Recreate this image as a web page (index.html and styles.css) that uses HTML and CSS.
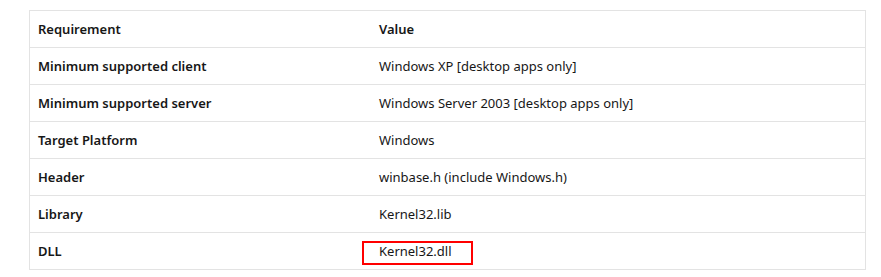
FILE: index.html
```html
<!DOCTYPE html>
<html>
<head>
<meta charset="utf-8">
<link rel="stylesheet" href="styles.css">
</head>
<body>
<div class="page">
  <table class="req">
    <thead>
      <tr><th class="c1">Requirement</th><th>Value</th></tr>
    </thead>
    <tbody>
      <tr><td class="c1">Minimum supported client</td><td>Windows XP [desktop apps only]</td></tr>
      <tr><td class="c1">Minimum supported server</td><td>Windows Server 2003 [desktop apps only]</td></tr>
      <tr><td class="c1">Target Platform</td><td>Windows</td></tr>
      <tr><td class="c1">Header</td><td>winbase.h (include Windows.h)</td></tr>
      <tr><td class="c1">Library</td><td>Kernel32.lib</td></tr>
      <tr><td class="c1">DLL</td><td class="marked">Kernel32.dll<span class="highlight"></span></td></tr>
    </tbody>
  </table>
</div>
</body>
</html>
```
FILE: styles.css
```css
html, body {
  margin: 0;
  background: #ffffff;
}
.page {
  padding: 10px 0 0 29px;
}
.req {
  border-collapse: collapse;
  width: 837px;
  font-family: "Noto Sans", "Open Sans", sans-serif;
  font-size: 13px;
  color: #171717;
}
.req th, .req td {
  border: 1px solid #e3e3e3;
  border-left: none;
  border-right: none;
  padding: 8px 8px;
  height: 20px;
  line-height: 20px;
  text-align: left;
  vertical-align: middle;
}
.req th:first-child, .req td:first-child {
  border-left: 1px solid #e3e3e3;
}
.req th:last-child, .req td:last-child {
  border-right: 1px solid #e3e3e3;
}
.req th {
  font-weight: 600;
}
.req td.c1 {
  font-weight: 600;
}
.req .c1 {
  width: 325px;
}
.marked {
  position: relative;
}
.highlight {
  position: absolute;
  left: -9px;
  top: 8px;
  width: 111px;
  height: 24px;
  box-sizing: border-box;
  border: 2px solid #ff0000;
}
```
